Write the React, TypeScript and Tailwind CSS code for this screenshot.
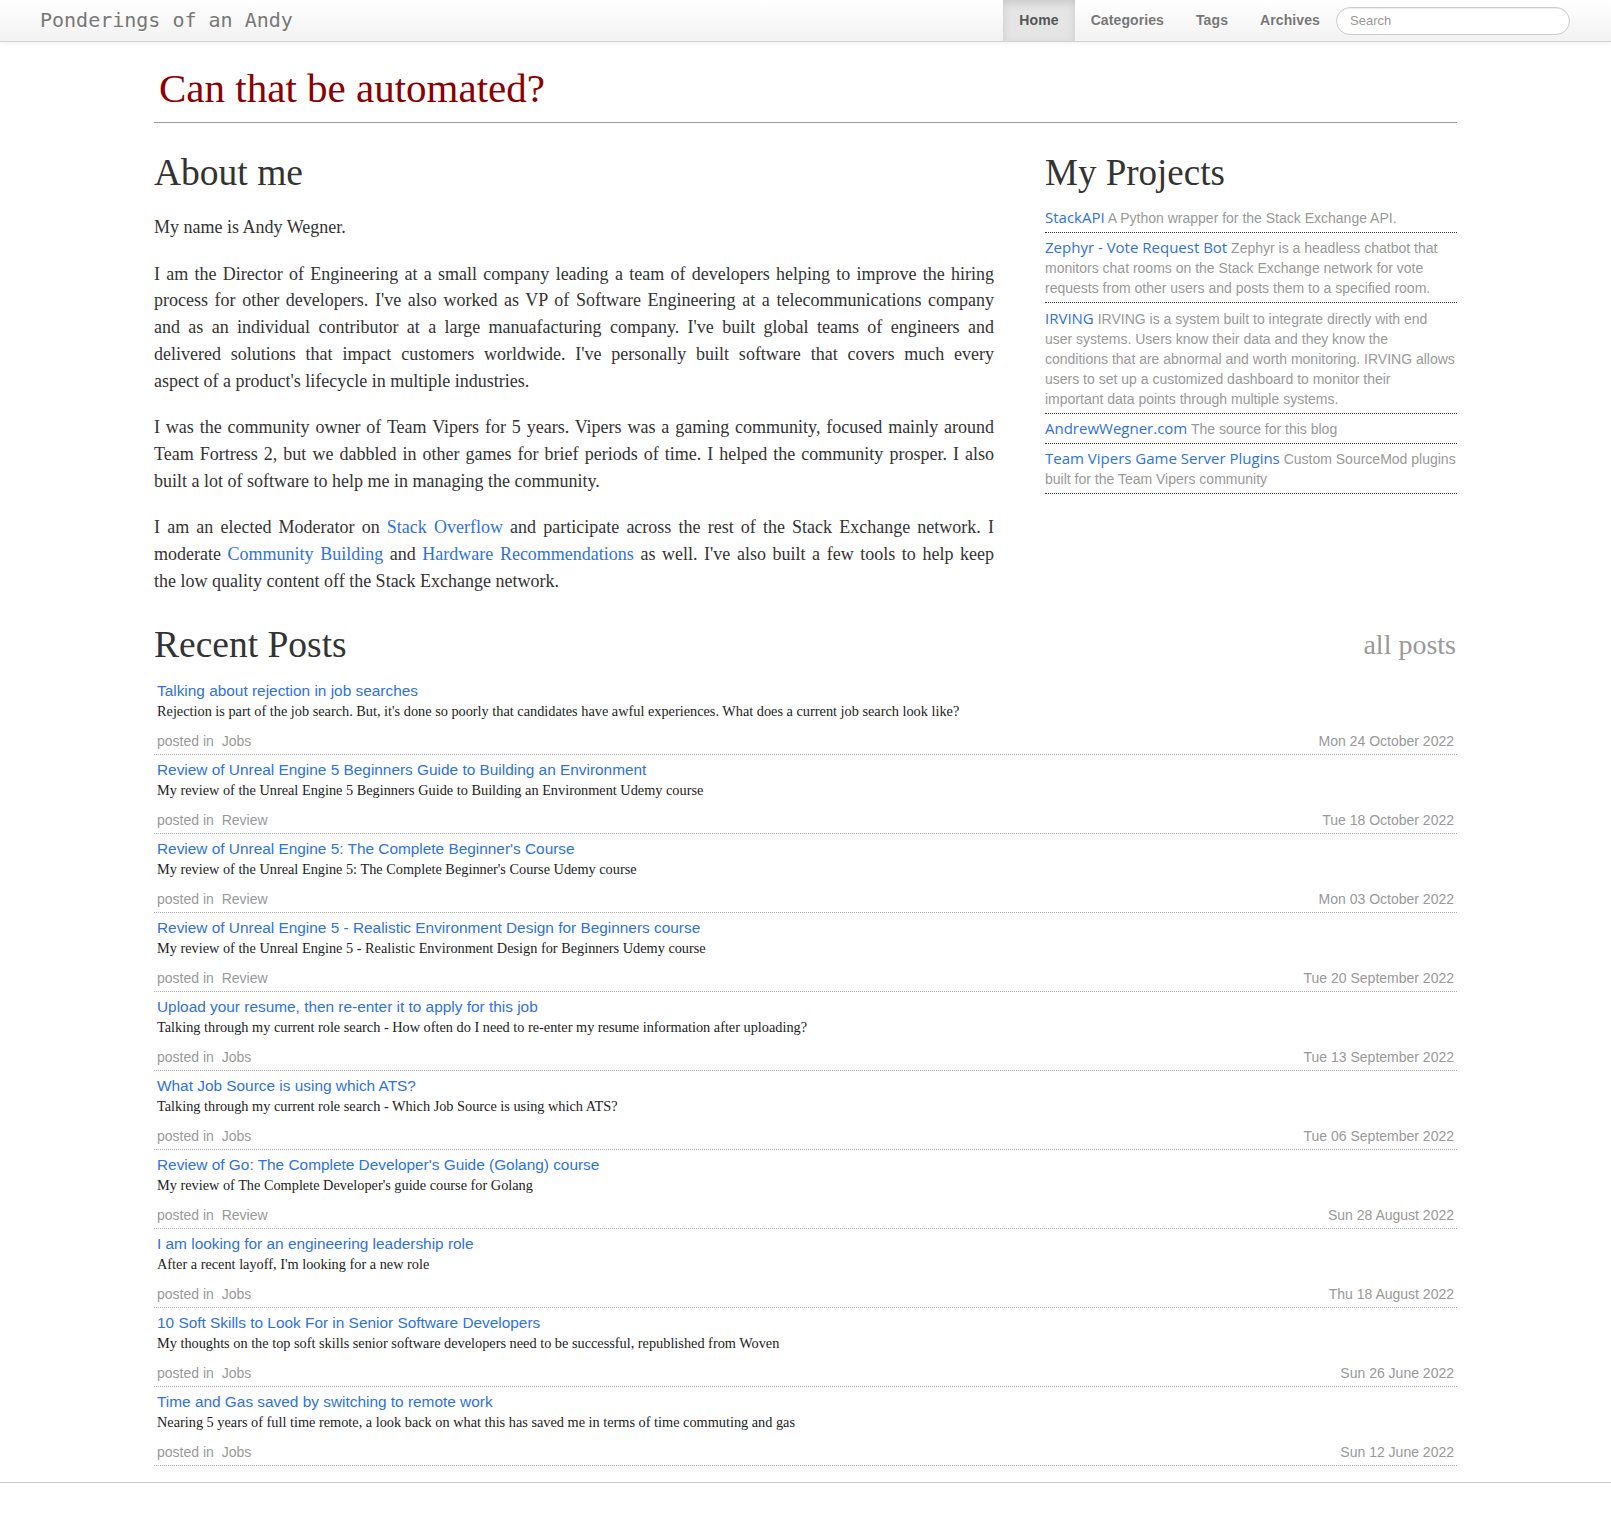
import React from "react";

type Post = { title: string; desc: string; cat: string; date: string };

const posts: Post[] = [
  {
    title: "Talking about rejection in job searches",
    desc: "Rejection is part of the job search. But, it's done so poorly that candidates have awful experiences. What does a current job search look like?",
    cat: "Jobs",
    date: "Mon 24 October 2022",
  },
  {
    title: "Review of Unreal Engine 5 Beginners Guide to Building an Environment",
    desc: "My review of the Unreal Engine 5 Beginners Guide to Building an Environment Udemy course",
    cat: "Review",
    date: "Tue 18 October 2022",
  },
  {
    title: "Review of Unreal Engine 5: The Complete Beginner's Course",
    desc: "My review of the Unreal Engine 5: The Complete Beginner's Course Udemy course",
    cat: "Review",
    date: "Mon 03 October 2022",
  },
  {
    title: "Review of Unreal Engine 5 - Realistic Environment Design for Beginners course",
    desc: "My review of the Unreal Engine 5 - Realistic Environment Design for Beginners Udemy course",
    cat: "Review",
    date: "Tue 20 September 2022",
  },
  {
    title: "Upload your resume, then re-enter it to apply for this job",
    desc: "Talking through my current role search - How often do I need to re-enter my resume information after uploading?",
    cat: "Jobs",
    date: "Tue 13 September 2022",
  },
  {
    title: "What Job Source is using which ATS?",
    desc: "Talking through my current role search - Which Job Source is using which ATS?",
    cat: "Jobs",
    date: "Tue 06 September 2022",
  },
  {
    title: "Review of Go: The Complete Developer's Guide (Golang) course",
    desc: "My review of The Complete Developer's guide course for Golang",
    cat: "Review",
    date: "Sun 28 August 2022",
  },
  {
    title: "I am looking for an engineering leadership role",
    desc: "After a recent layoff, I'm looking for a new role",
    cat: "Jobs",
    date: "Thu 18 August 2022",
  },
  {
    title: "10 Soft Skills to Look For in Senior Software Developers",
    desc: "My thoughts on the top soft skills senior software developers need to be successful, republished from Woven",
    cat: "Jobs",
    date: "Sun 26 June 2022",
  },
  {
    title: "Time and Gas saved by switching to remote work",
    desc: "Nearing 5 years of full time remote, a look back on what this has saved me in terms of time commuting and gas",
    cat: "Jobs",
    date: "Sun 12 June 2022",
  },
];

const projects: { name: string; desc: React.ReactNode }[] = [
  { name: "StackAPI", desc: "A Python wrapper for the Stack Exchange API." },
  {
    name: "Zephyr - Vote Request Bot",
    desc: (
      <>
        Zephyr is a headless chatbot that
        <br />
        monitors chat rooms on the Stack Exchange network for vote
        <br />
        requests from other users and posts them to a specified room.
      </>
    ),
  },
  {
    name: "IRVING",
    desc: (
      <>
        IRVING is a system built to integrate directly with end
        <br />
        user systems. Users know their data and they know the
        <br />
        conditions that are abnormal and worth monitoring. IRVING allows
        <br />
        users to set up a customized dashboard to monitor their
        <br />
        important data points through multiple systems.
      </>
    ),
  },
  { name: "AndrewWegner.com", desc: "The source for this blog" },
  {
    name: "Team Vipers Game Server Plugins",
    desc: (
      <>
        Custom SourceMod plugins
        <br />
        built for the Team Vipers community
      </>
    ),
  },
];

function Para({ lines }: { lines: React.ReactNode[] }) {
  return (
    <p className="mb-5">
      {lines.map((l, i) =>
        i < lines.length - 1 ? (
          <span key={i} className="block text-justify [text-align-last:justify]">
            {l}
          </span>
        ) : (
          <span key={i} className="block">
            {l}
          </span>
        )
      )}
    </p>
  );
}

function A({ children }: { children: React.ReactNode }) {
  return <a className="text-[#2f72dc]">{children}</a>;
}

export default function App() {
  return (
    <div className="min-h-[1527px] bg-white font-['Liberation_Sans',Arial,sans-serif] text-[#333]">
      {/* Navbar */}
      <div className="flex h-[42px] items-start justify-between border-b border-[#d4d4d4] bg-gradient-to-b from-white to-[#f2f2f2] shadow-[0_1px_4px_rgba(0,0,0,0.065)]">
        <div className="pl-[40px] font-['DejaVu_Sans_Mono',monospace] text-[20px] leading-[40px] text-[#777] [text-shadow:0_1px_0_#fff]">
          Ponderings of an Andy
        </div>
        <div className="mr-[41px] flex items-center">
          <ul className="flex text-[14px] font-bold tracking-[0.1px]">
            <li className="flex h-[41px] items-center bg-[#e5e5e5] px-[16px] text-[#555] shadow-[inset_0_3px_8px_rgba(0,0,0,0.125)]">
              Home
            </li>
            <li className="flex h-[41px] items-center px-[16px] text-[#777] [text-shadow:0_1px_0_#fff]">
              Categories
            </li>
            <li className="flex h-[41px] items-center px-[16px] text-[#777] [text-shadow:0_1px_0_#fff]">
              Tags
            </li>
            <li className="flex h-[41px] items-center px-[16px] text-[#777] [text-shadow:0_1px_0_#fff]">
              Archives
            </li>
          </ul>
          <div className="flex h-[28px] w-[234px] items-center rounded-full border border-[#ccc] bg-white pl-[13px] text-[13px] text-[#999] shadow-[inset_0_1px_1px_rgba(0,0,0,0.075)]">
            Search
          </div>
        </div>
      </div>

      {/* Main container */}
      <div className="mx-auto w-[1303px]">
        <h1 className="pl-[5px] pt-[24px] font-['Liberation_Serif',serif] text-[41px] leading-[45px] text-[#8b0000]">
          Can that be automated?
        </h1>
        <div className="mt-[11px] border-t border-[#999]" />

        <div className="mt-[30px] flex justify-between">
          {/* About */}
          <div className="w-[840px] font-['Liberation_Serif',serif] text-[18px] leading-[26.7px] text-[#333]">
            <h2 className="mb-[21px] text-[37.5px] leading-[40px] text-[#333]">About me</h2>
            <p className="mb-5">My name is Andy Wegner.</p>
            <Para
              lines={[
                "I am the Director of Engineering at a small company leading a team of developers helping to improve the hiring",
                "process for other developers. I've also worked as VP of Software Engineering at a telecommunications company",
                "and as an individual contributor at a large manuafacturing company. I've built global teams of engineers and",
                "delivered solutions that impact customers worldwide. I've personally built software that covers much every",
                "aspect of a product's lifecycle in multiple industries.",
              ]}
            />
            <Para
              lines={[
                "I was the community owner of Team Vipers for 5 years. Vipers was a gaming community, focused mainly around",
                "Team Fortress 2, but we dabbled in other games for brief periods of time. I helped the community prosper. I also",
                "built a lot of software to help me in managing the community.",
              ]}
            />
            <Para
              lines={[
                <>
                  I am an elected Moderator on <A>Stack Overflow</A> and participate across the rest of the Stack Exchange network. I
                </>,
                <>
                  moderate <A>Community Building</A> and <A>Hardware Recommendations</A> as well. I've also built a few tools to help keep
                </>,
                "the low quality content off the Stack Exchange network.",
              ]}
            />
          </div>

          {/* Projects */}
          <div className="w-[412px]">
            <h2 className="mb-[10px] font-['Liberation_Serif',serif] text-[37px] leading-[40px] text-[#333]">
              My Projects
            </h2>
            <ul>
              {projects.map((p) => (
                <li
                  key={p.name}
                  className="border-b border-dotted border-[#333] pb-[4px] pt-[5.2px] text-[14px] leading-[20px] text-[#999]"
                >
                  <a className="font-['Open_Sans',sans-serif] text-[15px] leading-[14px] text-[#2f72dc]">{p.name}</a>{" "}
                  {p.desc}
                </li>
              ))}
            </ul>
          </div>
        </div>

        {/* Recent posts */}
        <div className="mt-[11px]">
          <div className="mb-[11px] flex items-start justify-between font-['Liberation_Serif',serif]">
            <h2 className="text-[37.5px] leading-[40px] text-[#333]">Recent Posts</h2>
            <a className="pr-[1px] text-[28px] leading-[40px] text-[#999]">all posts</a>
          </div>
          <ul>
            {posts.map((p) => (
              <li key={p.title} className="border-b border-dotted border-[#aaa] px-[3px] pb-[3px] pt-[5px]">
                <div className="text-[15.4px] leading-[20px] text-[#2f72dc]">{p.title}</div>
                <div className="font-['Liberation_Serif',serif] text-[14.3px] leading-[20px] text-[#222]">{p.desc}</div>
                <div className="mt-[10px] flex justify-between text-[14px] leading-[20px] text-[#999]">
                  <span>
                    posted in <span className="ml-[4px]">{p.cat}</span>
                  </span>
                  <span>{p.date}</span>
                </div>
              </li>
            ))}
          </ul>
        </div>
      </div>

      <div className="mt-[16px] h-[44px] border-t border-[#ccc]" />
    </div>
  );
}
